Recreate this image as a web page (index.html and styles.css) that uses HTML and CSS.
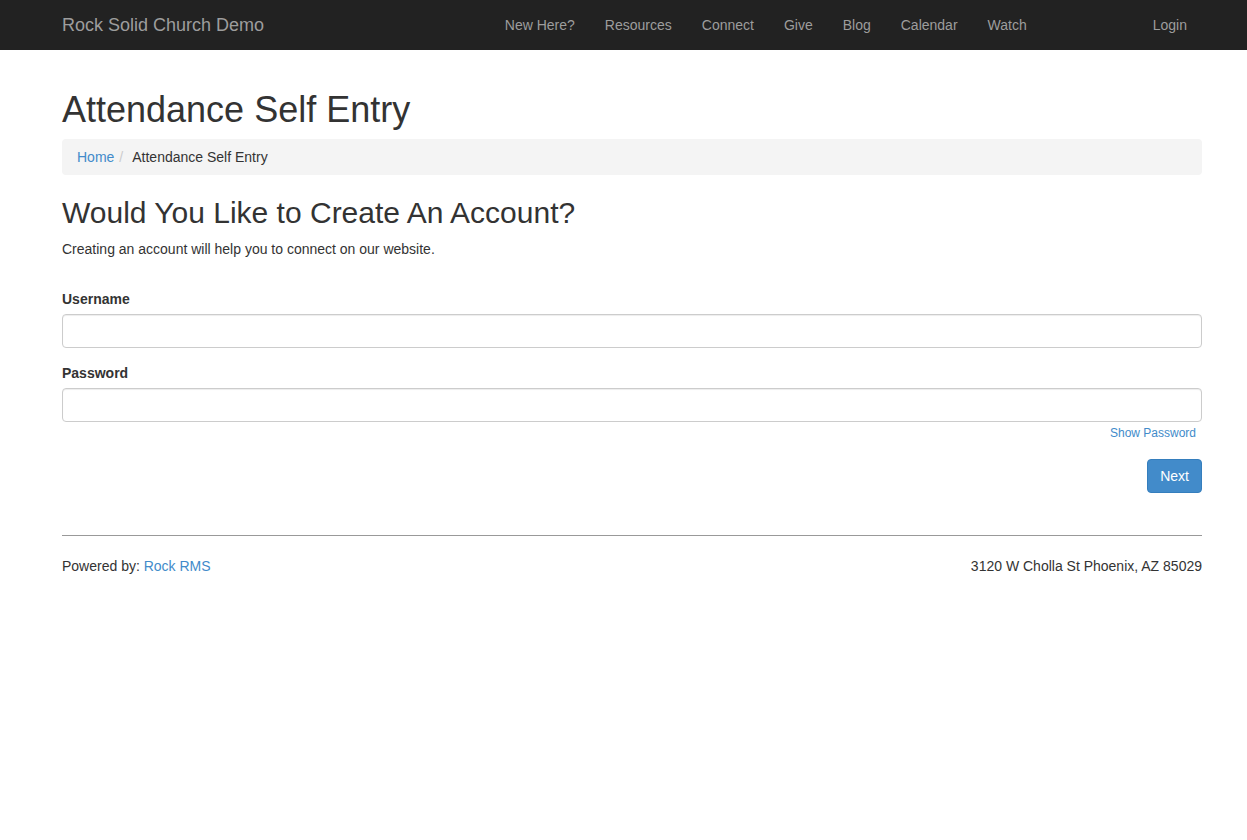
FILE: index.html
```html
<!DOCTYPE html>
<html lang="en">
<head>
  <meta charset="UTF-8" />
  <meta name="viewport" content="width=device-width, initial-scale=1.0"/>
  <title>Attendance Self Entry - Rock Solid Church Demo</title>
  <link rel="stylesheet" href="styles.css">
</head>

<body>
  <!-- Barra superior -->
  <header class="navbar">
    <div class="container navbar-inner">
      <a href="#" class="navbar-brand">Rock Solid Church Demo</a>
      <ul class="nav-main">
        <li><a href="#">New Here?</a></li>
        <li><a href="#">Resources</a></li>
        <li><a href="#">Connect</a></li>
        <li><a href="#">Give</a></li>
        <li><a href="#">Blog</a></li>
        <li><a href="#">Calendar</a></li>
        <li><a href="#">Watch</a></li>
      </ul>
      <ul class="nav-login">
        <li><a href="#">Login</a></li>
      </ul>
    </div>
  </header>

  <main class="container">
    <h1 class="page-title">Attendance Self Entry</h1>
    <ol class="breadcrumb">
      <li><a href="#">Home</a></li>
      <li class="active">Attendance Self Entry</li>
    </ol>

    <h2 class="section-title">Would You Like to Create An Account?</h2>
    <p class="intro">Creating an account will help you to connect on our website.</p>

    <form class="account-form">
      <div class="form-group">
        <label for="username">Username</label>
        <input type="text" id="username" class="form-control" />
      </div>
      <div class="form-group form-group-pass">
        <label for="password">Password</label>
        <input type="password" id="password" class="form-control" />
      </div>
      <div class="show-password"><a href="#">Show Password</a></div>
      <div class="actions">
        <button type="button" class="btn-primary">Next</button>
      </div>
    </form>

    <hr class="footer-rule" />

    <footer class="page-footer">
      <span>Powered by: <a href="#">Rock RMS</a></span>
      <span>3120 W Cholla St Phoenix, AZ 85029</span>
    </footer>
  </main>
</body>
</html>
```

FILE: styles.css
```css
/* Base no estilo Bootstrap 3 */
body {
  margin: 0;
  font-family: "Liberation Sans", Arial, sans-serif;
  font-size: 14px;
  line-height: 20px;
  color: #333;
  background: #fff;
}

a {
  color: #428bca;
  text-decoration: none;
}

/* Container: largura 1140 com margem esquerda de 62px */
.container {
  width: 1140px;
  margin-left: 62px;
}

/* Barra superior */
.navbar {
  height: 50px;
  background: #222;
}
.navbar-inner {
  display: flex;
  align-items: center;
  height: 50px;
}
.navbar-brand {
  font-size: 18px;
  color: #9d9d9d;
  line-height: 20px;
}
.nav-main,
.nav-login {
  display: flex;
  list-style: none;
  margin: 0;
  padding: 0;
}
.nav-main {
  margin-left: auto;
}
.nav-login {
  margin-left: 96px;
}
.nav-main a,
.nav-login a {
  display: block;
  padding: 15px;
  color: #9d9d9d;
}

/* Títulos */
.page-title {
  margin: 40px 0 9px;
  font-size: 36px;
  font-weight: normal;
  line-height: 39.6px;
}

.breadcrumb {
  display: flex;
  list-style: none;
  margin: 0 0 21px;
  padding: 8px 15px;
  background: #f4f4f4;
  border-radius: 4px;
}
.breadcrumb li + li::before {
  content: "/";
  padding: 0 9px 0 5px;
  color: #ccc;
}

.section-title {
  margin: 0 0 10px;
  font-size: 30px;
  font-weight: normal;
  line-height: 33px;
}

.intro {
  margin: 0 0 30px;
}

/* Formulário */
.form-group {
  margin-bottom: 15px;
}
.form-group-pass {
  margin-bottom: 0;
}
.form-group label {
  display: block;
  margin-bottom: 5px;
  font-weight: bold;
}
.form-control {
  display: block;
  box-sizing: border-box;
  width: 100%;
  height: 34px;
  padding: 6px 12px;
  font-size: 14px;
  border: 1px solid #ccc;
  border-radius: 4px;
  box-shadow: inset 0 1px 1px rgba(0, 0, 0, 0.075);
}

.show-password {
  text-align: right;
  padding-right: 6px;
  margin-top: 2px;
  font-size: 12px;
  line-height: 18px;
}

.actions {
  display: flex;
  justify-content: flex-end;
  margin-top: 17px;
}
.btn-primary {
  height: 34px;
  padding: 6px 12px;
  font-family: inherit;
  font-size: 14px;
  color: #fff;
  background: #428bca;
  border: 1px solid #357ebd;
  border-radius: 4px;
  cursor: pointer;
}

/* Rodapé */
.footer-rule {
  margin: 42px 0 20px;
  border: 0;
  border-top: 1px solid #999;
}
.page-footer {
  display: flex;
  justify-content: space-between;
}
```
